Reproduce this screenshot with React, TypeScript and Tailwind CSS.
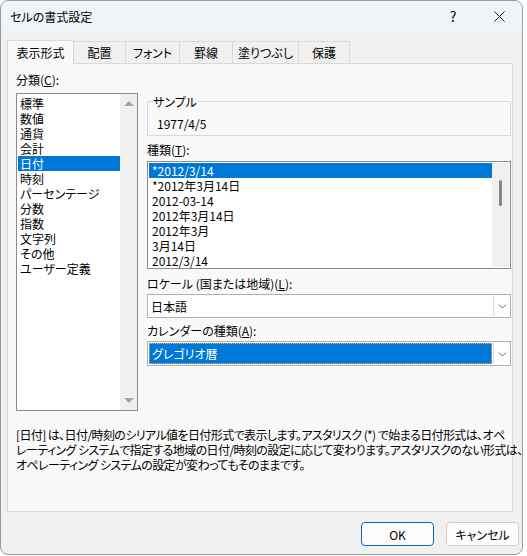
import React from 'react';

const categories = ['標準', '数値', '通貨', '会計', '日付', '時刻', 'パーセンテージ', '分数', '指数', '文字列', 'その他', 'ユーザー定義'];
const types = ['*2012/3/14', '*2012年3月14日', '2012-03-14', '2012年3月14日', '2012年3月', '3月14日', '2012/3/14'];
const tabs = [
  { label: '配置', w: 'w-[52px]' },
  { label: 'フォント', w: 'w-[54px]' },
  { label: '罫線', w: 'w-[53px]' },
  { label: '塗りつぶし', w: 'w-[66px]' },
  { label: '保護', w: 'w-[51px]' },
];

const Chevron = () => (
  <svg width="9" height="6" viewBox="0 0 9 6" className="text-[#606060]">
    <path d="M1 1.5 L4.5 5 L8 1.5" fill="none" stroke="currentColor" strokeWidth="1" />
  </svg>
);

export default function App() {
  return (
    <div className="w-[527px] h-[556px] bg-white font-['Noto_Sans_CJK_JP',sans-serif] [font-feature-settings:'palt'] text-[12px] text-black">
      <div className="w-[523px] h-[555px] border border-[#9a9a9a] rounded-[8px] overflow-hidden bg-[#f0f0f0] flex flex-col">
        {/* title bar */}
        <div className="h-[30px] bg-[#eef4f7] flex items-center shrink-0">
          <span className="pl-[9px] leading-[15px] flex-1">セルの書式設定</span>
          <div className="w-[46px] h-full flex items-center justify-center text-[14px]">?</div>
          <div className="w-[46px] h-full flex items-center justify-center">
            <svg width="11" height="11" viewBox="0 0 11 11">
              <path d="M0.5 0.5 L10.5 10.5 M10.5 0.5 L0.5 10.5" stroke="#1a1a1a" strokeWidth="1" />
            </svg>
          </div>
        </div>

        <div className="flex-1 pt-[9px] pl-[6px] flex flex-col">
          {/* tabs */}
          <div className="flex items-end h-[23px]">
            <div className="relative z-10 w-[67px] h-[24px] mb-[-1px] bg-[#f9f9f9] border border-b-0 border-[#d9d9d9] flex items-center justify-center leading-[15px]">
              表示形式
            </div>
            {tabs.map((t) => (
              <div key={t.label} className={`${t.w} h-[22px] border-t border-r border-[#d9d9d9] flex items-center justify-center leading-[15px]`}>
                {t.label}
              </div>
            ))}
          </div>

          {/* panel */}
          <div className="w-[506px] h-[449px] border border-[#d9d9d9] bg-[#f9f9f9] pl-[8px] pt-[8px] flex flex-col">
            <div className="flex">
              <div className="w-[122px] flex flex-col">
                <div className="leading-[15px]">分類(<span className="underline">C</span>):</div>
                <div className="mt-[6px] h-[318px] border border-[#8a8a8a] bg-white flex">
                  <div className="flex-1 pt-[2px] pl-[1px]">
                    {categories.map((c, i) => (
                      <div key={c} className={`h-[15px] leading-[15px] pl-[2px] whitespace-nowrap ${i === 4 ? 'bg-[#0078d7] text-white' : ''}`}>
                        {c}
                      </div>
                    ))}
                  </div>
                  <div className="w-[17px] bg-[#f0f0f0] flex flex-col justify-between items-center py-[7px]">
                    <svg width="10" height="5" viewBox="0 0 10 5"><path d="M0 5 L5 0 L10 5 Z" fill="#a3a3a3" /></svg>
                    <svg width="10" height="5" viewBox="0 0 10 5"><path d="M0 0 L5 5 L10 0 Z" fill="#a3a3a3" /></svg>
                  </div>
                </div>
              </div>

              <div className="ml-[9px] w-[364px] pt-[22px] flex flex-col">
                <fieldset className="border border-[#d9d9d9] px-[5px] pb-[4px]">
                  <legend className="leading-[15px] px-0">サンプル</legend>
                  <div className="pt-[7px] pl-[4px] leading-[15px]">1977/4/5</div>
                </fieldset>

                <div className="mt-[6px] leading-[15px]">種類(<span className="underline">T</span>):</div>
                <div className="mt-[4px] h-[108px] border border-[#8a8a8a] bg-white flex p-[1px]">
                  <div className="flex-1">
                    {types.map((t, i) => (
                      <div key={t} className={`h-[15px] leading-[15px] pl-[3px] whitespace-nowrap ${i === 0 ? 'bg-[#0078d7] text-white' : ''}`}>
                        {t}
                      </div>
                    ))}
                  </div>
                  <div className="w-[17px] bg-[#f0f0f0] flex justify-center pt-[17px]">
                    <div className="w-[3px] h-[26px] rounded-full bg-[#858585]" />
                  </div>
                </div>

                <div className="mt-[7px] leading-[15px]">ロケール (国または地域)(<span className="underline">L</span>):</div>
                <div className="mt-[3px] h-[24px] border border-[#b0b0b0] bg-white flex">
                  <div className="flex-1 pl-[3px] flex items-center leading-[15px]">日本語</div>
                  <div className="w-[17px] my-[1px] border-l border-[#dcdcdc] flex items-center justify-center">
                    <Chevron />
                  </div>
                </div>

                <div className="mt-[5px] leading-[15px]">カレンダーの種類(<span className="underline">A</span>):</div>
                <div className="mt-[3px] h-[25px] border border-[#b0b0b0] bg-white flex">
                  <div className="flex-1 m-[1px] bg-[#0078d7] border border-dotted border-[#f2b25c] text-white flex items-center pl-[2px] leading-[15px]">
                    グレゴリオ暦
                  </div>
                  <div className="w-[17px] my-[1px] border-l border-[#dcdcdc] flex items-center justify-center">
                    <Chevron />
                  </div>
                </div>
              </div>
            </div>

            <div className="mt-[16px] leading-[15px] whitespace-nowrap tracking-[-0.6px]">
              <div>[日付] は、日付/時刻のシリアル値を日付形式で表示します。アスタリスク (*) で始まる日付形式は、オペ</div>
              <div>レーティング システムで指定する地域の日付/時刻の設定に応じて変わります。アスタリスクのない形式は、</div>
              <div>オペレーティング システムの設定が変わってもそのままです。</div>
            </div>
          </div>

          {/* buttons */}
          <div className="mt-[10px] w-[512px] flex justify-end gap-[12px]">
            <button className="w-[73px] h-[24px] rounded-[4px] border border-[#0067c0] bg-[#fdfdfd] leading-[15px]">OK</button>
            <button className="w-[73px] h-[24px] rounded-[4px] border border-[#d0d0d0] bg-[#fdfdfd] leading-[15px]">キャンセル</button>
          </div>
        </div>
      </div>
    </div>
  );
}
